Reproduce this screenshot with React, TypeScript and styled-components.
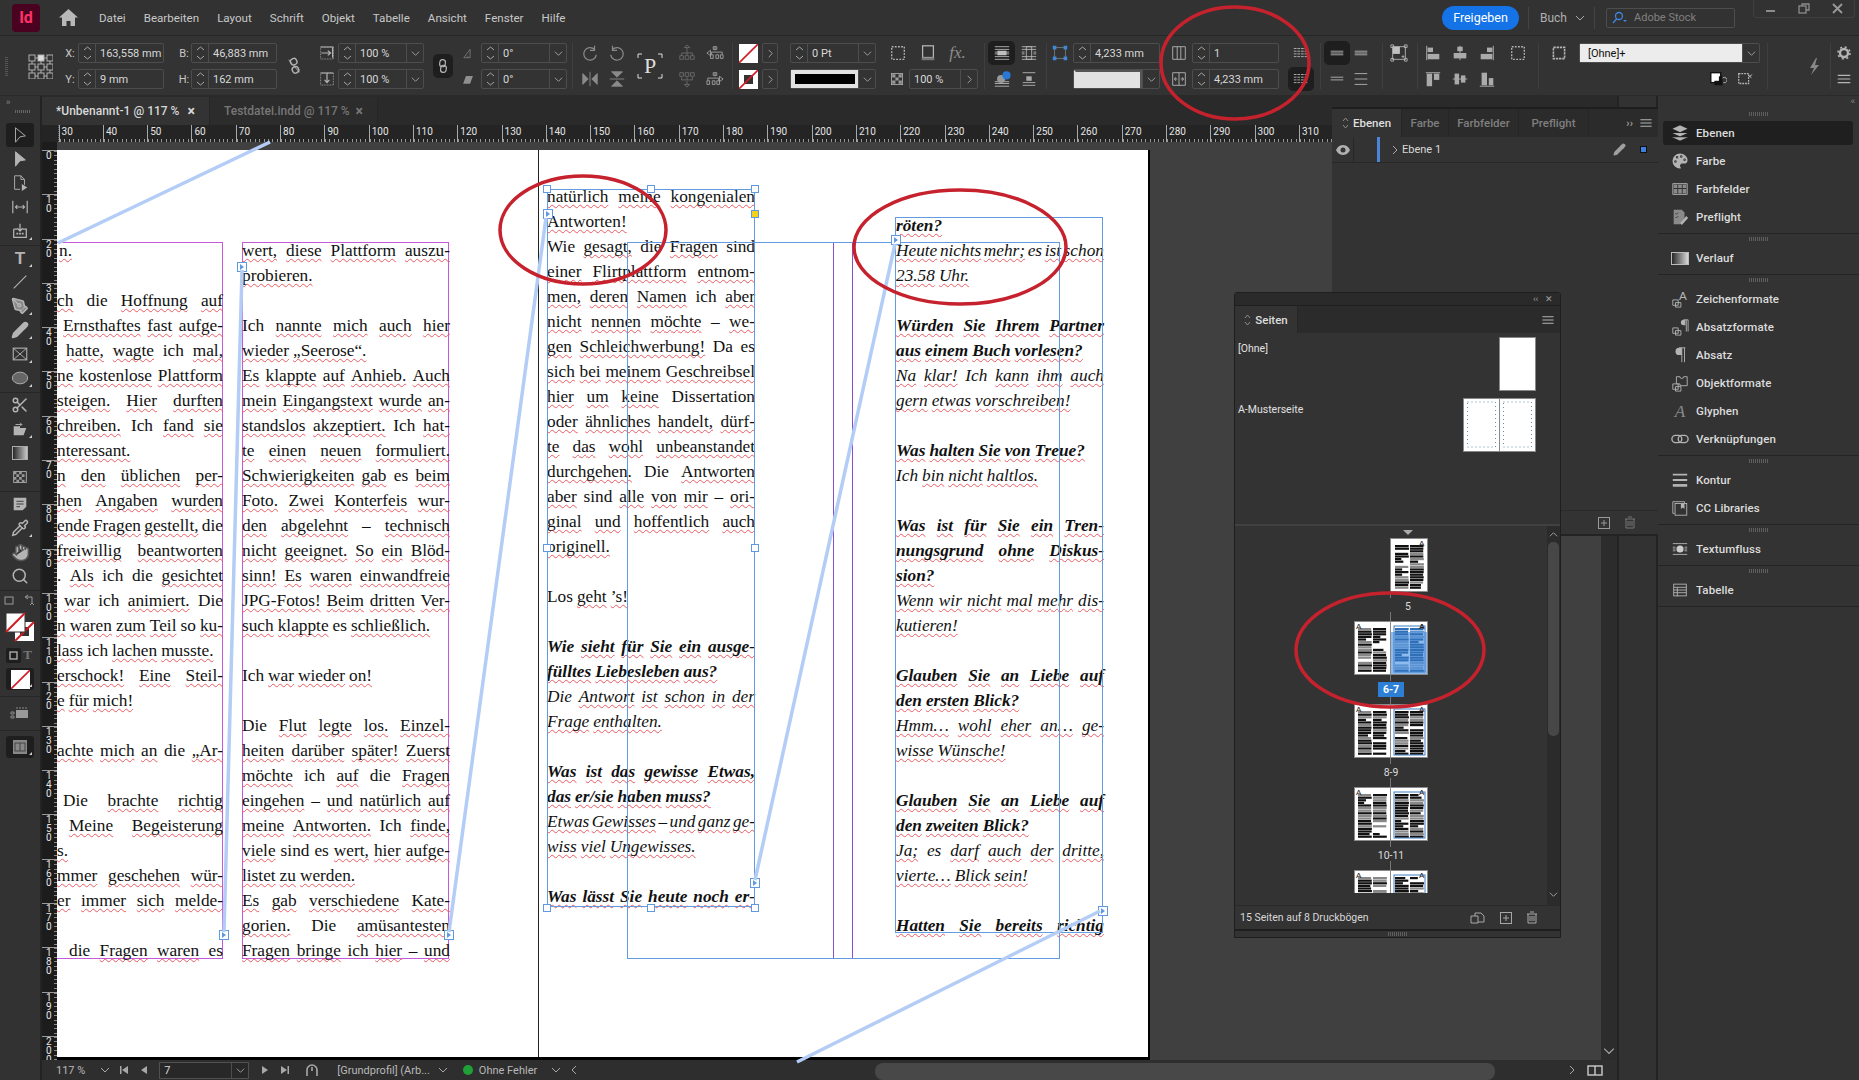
import React from "react";
import styled, { createGlobalStyle } from "styled-components";
import { Hand, Layers, Palette, Pencil, PenTool, Pipette, Scissors, Search } from "lucide-react";

const F = "#b4b4b4";

const Global = createGlobalStyle`
  html, body { margin: 0; padding: 0; background: #333; }
  body { width: 1859px; height: 1080px; overflow: hidden; font-family: Roboto, "Liberation Sans", sans-serif; }
  * { box-sizing: border-box; }
`;

const Shell = styled.div`
  position: relative;
  width: 1859px;
  height: 1080px;
  overflow: hidden;
  background: #333;
  color: #d8d8d8;
  display: flex;
  flex-direction: column;
`;

/* menu bar */
const MenuBar = styled.div`
  height: 36px;
  flex: none;
  display: flex;
  align-items: center;
  background: #323232;
  border-bottom: 1px solid #262626;
`;
const Logo = styled.div`
  width: 28px;
  height: 28px;
  margin-left: 12px;
  border-radius: 4px;
  background: #49021f;
  color: #ff3366;
  font-size: 16px;
  font-weight: 700;
  display: grid;
  place-items: center;
`;
const HomeBtn = styled.div`
  margin-left: 18px;
  width: 20px;
  display: grid;
  place-items: center;
`;
const MenuList = styled.div`
  margin-left: 21px;
  display: flex;
  gap: 18px;
  font-size: 11.6px;
  color: #c8c8c8;
`;
const MenuRight = styled.div`
  margin-left: auto;
  display: flex;
  align-items: center;
  height: 100%;
`;
const Share = styled.div`
  width: 77px;
  height: 24px;
  flex: none;
  border-radius: 12px;
  background: #1473e6;
  color: #fff;
  font-size: 12.5px;
  font-weight: 400;
  display: grid;
  place-items: center;
`;
const MenuSep = styled.div`
  width: 1px;
  height: 22px;
  background: #444;
  margin: 0 11px 0 9px;
`;
const BookLabel = styled.span`
  font-size: 12px;
  color: #b0b0b0;
  width: 35px;
`;
const StockSearch = styled.div`
  width: 129px;
  height: 20px;
  border: 1px solid #4d4d4d;
  border-radius: 2px;
  display: flex;
  align-items: center;
  gap: 6px;
  padding-left: 5px;
  font-size: 11px;
  color: #808080;
`;
const WinControls = styled.div`
  align-self: flex-start;
  margin-left: 18px;
  margin-right: 4px;
  width: 102px;
  height: 18px;
  border: 1px solid #3f3f3f;
  border-top: 0;
  border-radius: 0 0 3px 3px;
  display: flex;
  align-items: center;
  justify-content: space-around;
`;

/* control bar */
const ControlBar = styled.div`
  height: 60px;
  flex: none;
  display: flex;
  align-items: flex-start;
  padding-top: 7px;
  background: #333;
  border-bottom: 1px solid #2a2a2a;
`;
const Col = styled.div<{ $ml: number; $w: number }>`
  margin-left: ${(p) => p.$ml}px;
  width: ${(p) => p.$w}px;
  flex: none;
  display: flex;
  flex-direction: column;
  gap: 6px;
  align-items: center;
`;
const Cell = styled.div<{ $on?: boolean }>`
  width: 100%;
  height: 20px;
  display: flex;
  align-items: center;
  justify-content: center;
  position: relative;
  font-size: 11px;
  color: #c8c8c8;
  ${(p) => (p.$on ? "background:#1e1e1e;border-radius:3px;outline:2px solid #1e1e1e;" : "")}
`;
const CellRow = styled.div`
  width: 100%;
  height: 20px;
  display: flex;
  align-items: center;
  justify-content: space-between;
`;
const ClearRow = styled(CellRow)`
  justify-content: flex-end;
  gap: 9px;
  padding-right: 6px;
`;
const Sep = styled.div<{ $ml: number }>`
  margin-left: ${(p) => p.$ml}px;
  width: 1px;
  height: 46px;
  flex: none;
  background: #3f3f3f;
`;
const Grip = styled.div`
  margin-left: 5px;
  margin-top: 14px;
  width: 3px;
  height: 20px;
  flex: none;
  background: repeating-linear-gradient(180deg, #555 0 1px, transparent 1px 2px);
`;
const FieldBox = styled.div`
  width: 100%;
  height: 20px;
  flex: none;
  border: 1px solid #4d4d4d;
  border-radius: 2px;
  display: flex;
  align-items: center;
  font-size: 11px;
  color: #d8d8d8;
`;
const OpacityField = styled(FieldBox)`
  width: 69px;
`;
const Stepper = styled.div`
  width: 17px;
  height: 100%;
  flex: none;
  border-right: 1px solid #4d4d4d;
  display: flex;
  align-items: center;
  justify-content: center;
`;
const FieldValue = styled.span`
  flex: 1;
  padding-left: 4px;
  white-space: nowrap;
`;
const FieldDrop = styled.div`
  width: 17px;
  height: 100%;
  flex: none;
  border-left: 1px solid #4d4d4d;
  display: grid;
  place-items: center;
`;
const Chevron = styled.svg`
  fill: none;
  stroke: #a8a8a8;
  stroke-width: 1;
`;
const StrokePreview = styled.div`
  flex: 1;
  height: 100%;
  background: #e2e2e2;
  display: flex;
  align-items: center;
  padding: 0 3px 0 4px;
`;
const StrokeBar = styled.div`
  height: 10px;
  width: 100%;
  background: #000;
`;
const FramePreview = styled.div`
  flex: 1;
  height: 100%;
  background: #e2e2e2;
  border-top: 2px solid #555;
  border-right: 2px solid #555;
  border-left: 2px solid #e2e2e2;
`;
const StyleSelect = styled.div`
  flex: 1;
  height: 100%;
  background: #ececec;
  color: #111;
  display: flex;
  align-items: center;
  padding-left: 8px;
  font-size: 11px;
`;
const Swatch = styled.svg`
  display: block;
`;
const FxLabel = styled.span`
  font-family: "Liberation Serif", serif;
  font-style: italic;
  font-size: 17px;
  color: #8c8c8c;
`;
const ProxyWrap = styled.div`
  height: 46px;
  display: flex;
  align-items: center;
`;

/* workspace */
const Workspace = styled.div`
  flex: 1;
  display: flex;
  min-height: 0;
`;
const ToolBar = styled.div`
  width: 42px;
  flex: none;
  background: #323232;
  border-right: 2px solid #232323;
  display: flex;
  flex-direction: column;
  align-items: center;
`;
const ToolHead = styled.div`
  height: 27px;
  width: 100%;
  flex: none;
  font-size: 9px;
  color: #8c8c8c;
  padding: 1px 0 0 6px;
  letter-spacing: -1px;
`;
const ToolGrip = styled.div`
  width: 16px;
  height: 3px;
  margin: 3px auto 0;
  background: repeating-linear-gradient(90deg, #666 0 1px, transparent 1px 2px);
`;
const ToolGroup = styled.div`
  width: 100%;
  padding-bottom: 2px;
  border-bottom: 1px solid #262626;
`;
const Tool = styled.div<{ $on?: boolean }>`
  position: relative;
  width: 28px;
  height: 24px;
  margin: 0 auto;
  display: grid;
  place-items: center;
  color: ${F};
  ${(p) => (p.$on ? "background:#1e1e1e;border-radius:3px;" : "")}
`;
const ToolCorner = styled.i`
  position: absolute;
  right: 2px;
  bottom: 3px;
  width: 0;
  height: 0;
  border-left: 3px solid transparent;
  border-bottom: 3px solid #cfcfcf;
`;
const ColorBlock = styled.div`
  position: relative;
  width: 32px;
  height: 50px;
  margin-top: 2px;
`;
const FormatRow = styled.div`
  margin-top: 4px;
  width: 28px;
  height: 16px;
  display: flex;
  align-items: center;
  justify-content: space-between;
`;
const FormatBox = styled.div`
  width: 15px;
  height: 15px;
  background: #1e1e1e;
  border-radius: 2px;
  display: grid;
  place-items: center;
`;
const FormatT = styled.span`
  font-family: "Liberation Serif", serif;
  font-weight: 700;
  font-size: 13px;
  color: #777;
  margin-right: 2px;
`;
const ToolSpaced = styled(Tool)`
  margin-top: 5px;
  height: 22px;
`;
const ToolLine = styled.div`
  width: 100%;
  height: 1px;
  margin-top: 6px;
  background: #262626;
`;

const DocArea = styled.div`
  flex: 1;
  min-width: 0;
  display: flex;
  flex-direction: column;
`;
const TabRow = styled.div`
  height: 29px;
  flex: none;
  padding-top: 1px;
  display: flex;
  background: #2a2a2a;
`;
const DocTab = styled.div<{ $on?: boolean }>`
  width: 168px;
  display: flex;
  align-items: center;
  justify-content: space-between;
  padding: 0 14px 0 14px;
  font-size: 12px;
  font-weight: 500;
  white-space: nowrap;
  background: ${(p) => (p.$on ? "#333" : "#2c2c2c")};
  color: ${(p) => (p.$on ? "#d8d8d8" : "#777")};
  border-right: 1px solid #262626;
`;
const TabClose = styled.b`
  font-size: 14px;
  font-weight: 700;
`;
const TopRuler = styled.div`
  height: 17px;
  flex: none;
  display: flex;
  background: #242424;
  overflow: hidden;
`;
const RulerOrigin = styled.div`
  width: 16.6px;
  flex: none;
  border-right: 1px dotted #666;
`;
const RulerCell = styled.div`
  width: 44.3px;
  flex: none;
  height: 17px;
  padding: 0 0 0 2px;
  font-size: 10px;
  line-height: 13px;
  color: #e4e4e4;
  border-left: 1px solid #a8a8a8;
  background: repeating-linear-gradient(90deg, #999 0 1px, transparent 1px 4.43px) bottom left / 100% 3px no-repeat;
`;
const CanvasRow = styled.div`
  flex: 1;
  min-height: 0;
  display: flex;
`;
const SideRuler = styled.div`
  width: 15px;
  flex: none;
  padding-top: 8px;
  background: #1c1c1c;
  overflow: hidden;
`;
const SideCell = styled.div`
  height: 44.3px;
  border-top: 1px solid #999;
  padding: 0 0 0 4px;
  font-size: 10px;
  line-height: 9px;
  color: #e4e4e4;
  display: flex;
  flex-direction: column;
  background: repeating-linear-gradient(180deg, #888 0 1px, transparent 1px 4.43px) top right / 3px 100% no-repeat;
`;
const Canvas = styled.div`
  flex: 1;
  min-width: 0;
  padding-top: 8px;
  background: #404040;
  overflow: hidden;
`;
const VScroll = styled.div`
  width: 16px;
  flex: none;
  background: #2c2c2c;
  display: flex;
  align-items: flex-end;
  justify-content: center;
  padding-bottom: 3px;
`;
const PageSheet = styled.div`
  position: relative;
  width: 1093px;
  height: 910px;
  background: #fff;
  border-right: 2px solid #000;
  border-bottom: 3px solid #000;
  overflow: hidden;
`;
const Spine = styled.div`
  position: absolute;
  left: 481px;
  top: 0;
  bottom: 0;
  width: 1px;
  background: #222;
`;
const Rect = styled.div<{ $x: number; $y: number; $w: number; $h: number; $c: string }>`
  position: absolute;
  left: ${(p) => p.$x}px;
  top: ${(p) => p.$y}px;
  width: ${(p) => p.$w}px;
  height: ${(p) => p.$h}px;
  border: 1px solid ${(p) => p.$c};
`;
const TextColumn = styled.div<{ $x: number; $y: number; $w: number }>`
  position: absolute;
  left: ${(p) => p.$x}px;
  top: ${(p) => p.$y}px;
  width: ${(p) => p.$w}px;
  font-family: "Liberation Serif", serif;
  font-size: 17.3px;
  color: #111;
`;
const TextLine = styled.div<{ $just: boolean; $kind: string; $inset: number }>`
  height: 25px;
  line-height: 25px;
  padding-left: ${(p) => p.$inset}px;
  display: flex;
  white-space: nowrap;
  justify-content: ${(p) => (p.$just ? "space-between" : "flex-start")};
  gap: ${(p) => (p.$just ? "0" : "4px")};
  font-style: ${(p) => (p.$kind ? "italic" : "normal")};
  font-weight: ${(p) => (p.$kind === "*" ? 700 : 400)};
`;
const Word = styled.span<{ $plain: boolean }>`
  text-decoration: ${(p) => (p.$plain ? "none" : "underline wavy #ea5a62")};
  text-decoration-thickness: 1px;
  text-underline-offset: 2px;
  text-decoration-skip-ink: none;
`;
const Handle = styled.div<{ $x: number; $y: number; $kind?: string }>`
  position: absolute;
  left: ${(p) => p.$x - 57 - 4}px;
  top: ${(p) => p.$y - 150 - 4}px;
  width: 8px;
  height: 8px;
  border: 1px solid #5f9ae0;
  background: ${(p) => (p.$kind === "y" ? "#f3d21c" : "#fff")};
`;
const Port = styled(Handle)`
  left: ${(p) => p.$x - 57 - 5}px;
  top: ${(p) => p.$y - 150 - 5}px;
  width: 10px;
  height: 10px;
  &::after {
    content: "";
    position: absolute;
    left: 2px;
    top: 1px;
    border-left: 4px solid #5f9ae0;
    border-top: 3px solid transparent;
    border-bottom: 3px solid transparent;
  }
`;

/* status bar */
const StatusBar = styled.div`
  height: 20px;
  flex: none;
  display: flex;
  align-items: center;
  background: #2e2e2e;
  font-size: 11px;
  color: #b8b8b8;
  white-space: nowrap;
`;
const StatusItem = styled.div<{ $ml: number }>`
  margin-left: ${(p) => p.$ml}px;
  flex: none;
  display: flex;
  align-items: center;
`;
const PageField = styled.div`
  margin-left: 11px;
  width: 90px;
  height: 17px;
  flex: none;
  border: 1px solid #505050;
  background: #282828;
  display: flex;
  align-items: center;
  justify-content: space-between;
  padding-left: 4px;
  color: #d8d8d8;
`;
const GreenDot = styled.i`
  width: 10px;
  height: 10px;
  border-radius: 50%;
  background: #1fa038;
  margin-right: 6px;
`;
const ScrollTrack = styled.div`
  flex: 1;
  height: 17px;
  padding-left: 296px;
  margin-top: 3px;
`;
const ScrollThumb = styled.div`
  width: 620px;
  height: 100%;
  background: #484848;
  border-radius: 8px;
`;
const StatusEnd = styled.div`
  width: 55px;
  flex: none;
  display: flex;
  align-items: center;
  gap: 10px;
  padding-left: 5px;
`;

const RightStrip = styled.div`
  width: 41px;
  flex: none;
  background: #323232;
  border-left: 2px solid #232323;
  border-right: 2px solid #232323;
`;

/* dock */
const Dock = styled.div`
  width: 201px;
  flex: none;
  background: #333;
`;
const DockHead = styled.div`
  height: 13px;
  text-align: right;
  padding-right: 5px;
  font-size: 9px;
  line-height: 11px;
  color: #8c8c8c;
  letter-spacing: -1px;
`;
const DockGroup = styled.div`
  padding-bottom: 2px;
  border-bottom: 1px solid #242424;
`;
const DockGrip = styled.div`
  width: 20px;
  height: 10px;
  margin: 0 auto;
  background: repeating-linear-gradient(90deg, #5e5e5e 0 1px, transparent 1px 2px) center / 100% 4px no-repeat;
`;
const DockItem = styled.div<{ $on?: boolean }>`
  height: 28px;
  display: flex;
  align-items: center;
  gap: 6px;
  padding-left: 7px;
  margin: 0 6px 0 5px;
  font-size: 11.5px;
  font-weight: 500;
  letter-spacing: 0.1px;
  color: #dcdcdc;
  ${(p) => (p.$on ? "background:#1f1f1f;border-radius:3px;height:24px;margin-top:2px;margin-bottom:2px;" : "")}
`;
const DockIcon = styled.div`
  width: 20px;
  height: 20px;
  flex: none;
  display: grid;
  place-items: center;
  color: ${F};
`;

/* floating panels */
const LayersPanel = styled.div`
  position: absolute;
  left: 1332px;
  top: 107px;
  width: 326px;
  height: 429px;
  display: flex;
  flex-direction: column;
  background: #333;
  border-top: 2px solid #1e1e1e;
  border-bottom: 2px solid #232323;
`;
const PanelTabs = styled.div`
  height: 28px;
  flex: none;
  display: flex;
  align-items: center;
  background: #2b2b2b;
  font-size: 11.5px;
  font-weight: 500;
  color: #7f7f7f;
`;
const PanelTab = styled.div<{ $on?: boolean; $w: number }>`
  width: ${(p) => p.$w}px;
  height: 100%;
  flex: none;
  display: flex;
  align-items: center;
  justify-content: center;
  gap: 4px;
  border-right: 1px solid #262626;
  ${(p) => (p.$on ? "background:#333;color:#dedede;" : "")}
`;
const PanelMenu = styled.div`
  margin-left: auto;
  padding-right: 4px;
  display: flex;
  align-items: center;
  gap: 5px;
  font-size: 11px;
  color: #a8a8a8;
`;
const LayerRow = styled.div`
  height: 26px;
  flex: none;
  display: flex;
  align-items: center;
  border-bottom: 1px solid #272727;
  font-size: 11px;
  color: #d8d8d8;
`;
const EyeCell = styled.div`
  width: 22px;
  height: 100%;
  border-right: 1px solid #272727;
  display: grid;
  place-items: center;
`;
const LayerColor = styled.i`
  margin-left: 23px;
  width: 3px;
  height: 100%;
  background: #4a85d8;
`;
const LayerName = styled.span`
  flex: 1;
  margin-left: 2px;
`;
const LayerMark = styled.i`
  width: 7px;
  height: 7px;
  margin: 0 11px 0 14px;
  background: #3f7fe0;
  border: 1px solid #111;
`;
const PanelFill = styled.div`
  flex: 1;
`;
const PanelFoot = styled.div<{ $h: number }>`
  height: ${(p) => p.$h}px;
  flex: none;
  display: flex;
  align-items: center;
  justify-content: flex-end;
  gap: 14px;
  padding-right: 22px;
  border-top: 1px solid #2a2a2a;
  font-size: 10.5px;
  color: #d8d8d8;
`;
const FootText = styled.span`
  margin-right: auto;
  padding-left: 5px;
`;

const PagesPanel = styled.div`
  position: absolute;
  left: 1234px;
  top: 292px;
  width: 327px;
  height: 646px;
  display: flex;
  flex-direction: column;
  background: #333;
  border: 1px solid #1e1e1e;
  border-radius: 3px 3px 0 0;
  z-index: 2;
`;
const PanelTitle = styled.div`
  height: 13px;
  flex: none;
  background: #2a2a2a;
  border-bottom: 1px solid #1e1e1e;
  text-align: right;
  padding-right: 7px;
  font-size: 9px;
  line-height: 12px;
  color: #a0a0a0;
`;
const PagesTabs = styled(PanelTabs)`
  height: 27px;
  color: #dedede;
`;
const Masters = styled.div`
  height: 193px;
  flex: none;
  padding-top: 4px;
  border-bottom: 2px solid #414141;
  display: flex;
  flex-direction: column;
  gap: 7px;
`;
const MasterRow = styled.div`
  height: 54px;
  display: flex;
  justify-content: space-between;
  padding: 0 24px 0 3px;
  font-size: 10.5px;
  color: #e0e0e0;
`;
const MasterName = styled.span`
  padding-top: 5px;
`;
const PagesBody = styled.div`
  flex: 1;
  min-height: 0;
  display: flex;
`;
const SpreadList = styled.div`
  flex: 1;
  height: 367px;
  padding: 12px 0 0 119px;
  overflow: hidden;
  position: relative;
`;
const SpreadRow = styled.div`
  width: 74px;
`;
const SpreadLabel = styled.div<{ $right?: boolean }>`
  height: 29px;
  display: flex;
  align-items: center;
  justify-content: center;
  padding-left: ${(p) => (p.$right ? "34px" : "0")};
  font-size: 10.5px;
  color: #dcdcdc;
  background: linear-gradient(#777, #777) no-repeat 36px 0 / 1px 6px, linear-gradient(#777, #777) no-repeat 36px 100% / 1px 9px;
`;
const LabelChip = styled.span<{ $on?: boolean }>`
  padding: 1px 5px;
  ${(p) => (p.$on ? "background:#2d7fd6;color:#fff;font-weight:700;" : "")}
`;
const TopMarker = styled.i`
  position: absolute;
  left: 168px;
  top: 4px;
  border-top: 5px solid #aaa;
  border-left: 5px solid transparent;
  border-right: 5px solid transparent;
`;
const PagesScroll = styled.div`
  width: 13px;
  flex: none;
  padding: 4px 1px 2px;
  background: #2b2b2b;
  display: flex;
  flex-direction: column;
  align-items: center;
  gap: 3px;
  height: 379px;
`;
const PagesThumb = styled.div`
  width: 11px;
  height: 194px;
  border-radius: 5px;
  background: #474747;
`;
const ScrollEnd = styled.div`
  margin-top: auto;
`;
const PanelResize = styled.div`
  height: 8px;
  flex: none;
  border-top: 2px solid #1e1e1e;
  background: repeating-linear-gradient(90deg, #5e5e5e 0 1px, transparent 1px 2px) center / 20px 4px no-repeat;
`;
const Overlay = styled.svg`
  position: absolute;
  inset: 0;
  z-index: 5;
  pointer-events: none;
`;

/* small drawings */
const Chev = ({ d = "down", s = 9 }: { d?: "down" | "up" | "left" | "right"; s?: number }) => {
  const pts = { down: "1,3 5,7 9,3", up: "1,7 5,3 9,7", left: "7,1 3,5 7,9", right: "3,1 7,5 3,9" }[d];
  return (
    <Chevron width={s} height={s} viewBox="0 0 10 10">
      <polyline points={pts} />
    </Chevron>
  );
};

const StepIcon = () => (
  <svg width="9" height="16" viewBox="0 0 9 16" fill="none" stroke="#a8a8a8">
    <polyline points="1,5 4.5,2 8,5" />
    <polyline points="1,11 4.5,14 8,11" />
  </svg>
);

const StepIconSmall = () => (
  <svg width="7" height="12" viewBox="0 0 7 12" fill="none" stroke="#8c8c8c">
    <polyline points="1,4 3.5,1 6,4" />
    <polyline points="1,8 3.5,11 6,8" />
  </svg>
);

const Ic = ({ s = 18, vb = 20, children }: { s?: number; vb?: number; children: React.ReactNode }) => (
  <svg width={s} height={s} viewBox={`0 0 ${vb} ${vb}`} fill="none" stroke={F} strokeWidth="1">
    {children}
  </svg>
);

const Field = ({ value, drop }: { value: string; drop?: boolean }) => (
  <FieldBox>
    <Stepper>
      <StepIcon />
    </Stepper>
    <FieldValue>{value}</FieldValue>
    {drop && (
      <FieldDrop>
        <Chev />
      </FieldDrop>
    )}
  </FieldBox>
);

const Proxy = () => {
  const cells = [];
  for (let r = 0; r < 3; r++)
    for (let c = 0; c < 3; c++)
      cells.push(<rect key={`${r}${c}`} x={1 + c * 9} y={1 + r * 9} width="6" height="6" fill={r === 0 && c === 1 ? "#ddd" : "none"} />);
  return (
    <svg width="25" height="25" viewBox="0 0 25 25" fill="none" stroke="#b0b0b0">
      {cells}
      <path d="M7 4h3M16 4h3M7 13h3M16 13h3M7 22h3M16 22h3M4 7v3M13 7v3M22 7v3M4 16v3M13 16v3M22 16v3" />
    </svg>
  );
};

const NoneSwatch = ({ inner }: { inner?: boolean }) => (
  <Swatch width="19" height="19" viewBox="0 0 19 19">
    <rect width="19" height="19" fill="#fff" />
    {inner && <rect x="5" y="5" width="9" height="9" fill="#333" />}
    <line x1="0" y1="19" x2="19" y2="0" stroke="#d01c24" strokeWidth="1.6" />
  </Swatch>
);

const lines = (ys: number[], x1: number, x2: number) => <path d={ys.map((y) => `M${x1} ${y}H${x2}`).join("")} />;

const ctl: Record<string, React.ReactNode> = {
  linkOff: (
    <>
      <rect x="6" y="2" width="7" height="7" rx="3" strokeWidth="1.6" transform="rotate(-25 9 5)" />
      <rect x="8" y="11" width="7" height="7" rx="3" strokeWidth="1.6" transform="rotate(-25 11 14)" />
      <path d="M4 3l12 14" />
    </>
  ),
  link: (
    <>
      <rect x="6" y="2" width="7" height="9" rx="3.5" strokeWidth="1.5" transform="rotate(8 10 6)" />
      <rect x="7" y="9" width="7" height="9" rx="3.5" strokeWidth="1.5" transform="rotate(8 10 14)" />
    </>
  ),
  scaleX: (
    <>
      <rect x="2" y="2.5" width="16" height="15" strokeDasharray="1 1" />
      <path d="M2 2.5h16M3 10h11M11 7l3.5 3-3.5 3" strokeWidth="1.5" />
      <path d="M17 3v13" strokeWidth="1.5" />
    </>
  ),
  scaleY: (
    <>
      <rect x="2" y="2.5" width="16" height="15" strokeDasharray="1 1" />
      <path d="M2 2.5h16M10 3v11M7 11l3 3.5 3-3.5" strokeWidth="1.5" />
    </>
  ),
  angle: <path d="M4 16L13 4v12zM10 16a4 4 0 0 0-1-3" stroke="#8a8a8a" />,
  shear: <path d="M3 16L7 5h10l-4 11z" fill="#8f8f8f" stroke="none" />,
  rotR: <path d="M15 6a7 7 0 1 0 2 6M15 2v5h-5" stroke="#8a8a8a" strokeWidth="1.4" />,
  rotL: <path d="M5 6a7 7 0 1 1-2 6M5 2v5h5" stroke="#8a8a8a" strokeWidth="1.4" />,
  flipH: <path d="M2 4v12l6-6zM18 4v12l-6-6z M10 2v16" fill="#8a8a8a" stroke="#8a8a8a" />,
  flipV: <path d="M4 2h12l-6 6zM4 18h12l-6-6z M2 10h16" fill="#8a8a8a" stroke="#8a8a8a" />,
  orgA: <path d="M10 1l3 3H7zM10 4v4M4 13v-3h12v3M10 8v5M2 13h4v4H2zM8 13h4v4H8zM14 13h4v4h-4z" stroke="#6c6c6c" />,
  orgB: <path d="M1 10l4-3v6zM10 3v4M6 12V9h12v3M5 12h3v4H5zM11 12h3v4h-3zM16 12h3v4h-3zM8 3h4v3H8z" stroke="#a0a0a0" />,
  orgC: <path d="M10 19l3-3H7zM10 12v4M4 8v3h12V8M10 8v3M2 3h4v4H2zM8 3h4v4H8zM14 3h4v4h-4z" stroke="#6c6c6c" />,
  orgD: <path d="M19 10l-4-3v6zM10 3v4M2 12V9h12v3M1 12h3v4H1zM7 12h3v4H7zM12 12h3v4h-3zM8 3h4v3H8z" stroke="#a0a0a0" />,
  frameDash: <rect x="3" y="3" width="14" height="14" strokeDasharray="2 1.5" strokeWidth="1.5" />,
  frameShadow: (
    <>
      <rect x="4" y="2" width="12" height="13" strokeWidth="1.4" />
      <rect x="3" y="15" width="14" height="3" fill="#777" stroke="none" />
    </>
  ),
  checker: (
    <>
      <rect x="3" y="3" width="14" height="14" />
      <path d="M4 4h4v4H4zM12 4h4v4h-4zM8 8h4v4H8zM4 12h4v4H4zM12 12h4v4h-4z" fill="#999" stroke="none" />
    </>
  ),
  wrapAll: (
    <>
      {lines([3, 6, 14, 17], 2, 18)}
      <rect x="5" y="7.5" width="10" height="5" fill="#ccc" stroke="none" />
      {lines([9, 11], 2, 18)}
    </>
  ),
  wrapBox: (
    <>
      {lines([3, 6, 14, 17], 2, 18)}
      <rect x="7" y="3" width="6" height="14" />
      {lines([9, 11], 2, 5)}
      {lines([9, 11], 15, 18)}
    </>
  ),
  wrapFlow: (
    <>
      {lines([13, 15, 18], 2, 18)}
      <circle cx="9" cy="10" r="4.5" fill="#999" stroke="none" />
      <circle cx="15" cy="6" r="4.5" fill="#2a78d6" stroke="none" />
    </>
  ),
  wrapMid: (
    <>
      {lines([3, 17, 14], 3, 17)}
      <rect x="7" y="7" width="6" height="5" fill="#aaa" stroke="none" />
    </>
  ),
  margin: (
    <>
      <rect x="4" y="4" width="12" height="12" stroke="#777" />
      <path d="M2 2h4v4H2zM14 2h4v4h-4zM2 14h4v4H2zM14 14h4v4h-4z" fill="#3d88d8" stroke="none" />
    </>
  ),
  cols: <path d="M3 3h14v14H3zM8 3v14M12 3v14" />,
  colGap: <path d="M3 3h14v14H3zM10 3v14M5 10h3M6.5 8L5 10l1.5 2M15 10h-3M13.5 8L15 10l-1.5 2" />,
  alignLines: <path d="M2 5h16M2 8h16M2 11h16M2 14h16" strokeDasharray="3 1" />,
  rule1: <path d="M3 8h14M3 10h14M3 12h14" />,
  rule2: <path d="M3 8h14M3 11h14" />,
  rule3: <path d="M3 4h14M3 16h14M3 10h14" />,
  fit: (
    <>
      <rect x="3" y="3" width="14" height="14" />
      <rect x="3" y="3" width="8" height="8" fill="#c0c0c0" stroke="none" />
      <path d="M1 1h3v3H1zM16 1h3v3h-3zM1 16h3v3H1zM16 16h3v3h-3zM13 14h3M14.5 12.5v3" />
    </>
  ),
  ohneFrame: <rect x="3" y="3" width="14" height="14" strokeDasharray="3 1" strokeWidth="2" />,
  clear1: (
    <>
      <rect x="2" y="3" width="11" height="11" fill="#fff" stroke="#111" strokeWidth="1.5" />
      <rect x="6" y="7" width="9" height="10" fill="#111" stroke="none" />
      <rect x="4" y="5" width="7" height="7" fill="#fff" stroke="none" />
      <path d="M15 9a3 3 0 1 1 1 5" />
    </>
  ),
  clear2: (
    <>
      <rect x="3" y="4" width="11" height="11" strokeDasharray="2 1" strokeWidth="1.4" />
      <path d="M14 8l4-3M15 6l2 3" />
    </>
  ),
  bolt: <path d="M12 2L6 12h4l-3 7 8-10h-4l2-7z" fill="#888" stroke="none" />,
  gear: (
    <>
      <circle cx="10" cy="10" r="5" strokeWidth="3" />
      <circle cx="10" cy="10" r="7.5" strokeWidth="2" strokeDasharray="2.5 3.4" />
    </>
  ),
  menu: <path d="M3 6h14M3 10h14M3 14h14" strokeWidth="1.3" />,
};

const Align = ({ kind }: { kind: number }) => {
  const shapes: React.ReactNode[] = [
    <>
      <path d="M3 2v16" />
      <rect x="4" y="4" width="6" height="5" fill="#aaa" stroke="none" />
      <rect x="4" y="11" width="13" height="6" fill="#aaa" stroke="none" />
    </>,
    <>
      <path d="M10 2v16" />
      <rect x="7" y="3" width="6" height="5" fill="#aaa" stroke="none" />
      <rect x="3" y="10" width="14" height="6" fill="#aaa" stroke="none" />
    </>,
    <>
      <path d="M17 2v16" />
      <rect x="10" y="4" width="6" height="5" fill="#aaa" stroke="none" />
      <rect x="3" y="11" width="13" height="6" fill="#aaa" stroke="none" />
    </>,
    <>
      <path d="M2 3h16" />
      <rect x="3" y="4" width="6" height="14" fill="#aaa" stroke="none" />
      <rect x="11" y="4" width="6" height="7" fill="#aaa" stroke="none" />
    </>,
    <>
      <path d="M2 10h16" />
      <rect x="4" y="4" width="5" height="12" fill="#aaa" stroke="none" />
      <rect x="11" y="6" width="5" height="8" fill="#aaa" stroke="none" />
    </>,
    <>
      <path d="M2 18h16" />
      <rect x="4" y="3" width="6" height="14" fill="#aaa" stroke="none" />
      <rect x="12" y="9" width="5" height="8" fill="#aaa" stroke="none" />
    </>,
  ];
  return <Ic>{shapes[kind]}</Ic>;
};

const Ctl = ({ name, s }: { name: string; s?: number }) => <Ic s={s}>{ctl[name]}</Ic>;

const TextFrameIcon = () => (
  <svg width="28" height="28" viewBox="0 0 28 28" fill="none" stroke="#ddd">
    <path d="M2 6V2h4M22 2h4v4M2 22v4h4M22 26h4v-4" />
    <text x="14" y="21" textAnchor="middle" fontFamily="Liberation Serif, serif" fontSize="22" fill="#ddd" stroke="none">
      P
    </text>
  </svg>
);

const ControlStrip = () => (
  <ControlBar>
    <Grip />
    <Col $ml={20} $w={25}>
      <ProxyWrap>
        <Proxy />
      </ProxyWrap>
    </Col>
    <Col $ml={11} $w={12}>
      <Cell>X:</Cell>
      <Cell>Y:</Cell>
    </Col>
    <Col $ml={2} $w={86}>
      <Field value="163,558 mm" />
      <Field value="9 mm" />
    </Col>
    <Col $ml={15} $w={10}>
      <Cell>B:</Cell>
      <Cell>H:</Cell>
    </Col>
    <Col $ml={2} $w={86}>
      <Field value="46,883 mm" />
      <Field value="162 mm" />
    </Col>
    <Col $ml={8} $w={18}>
      <ProxyWrap>
        <Ctl name="linkOff" />
      </ProxyWrap>
    </Col>
    <Col $ml={16} $w={16}>
      <Cell>
        <Ctl name="scaleX" s={16} />
      </Cell>
      <Cell>
        <Ctl name="scaleY" s={16} />
      </Cell>
    </Col>
    <Col $ml={3} $w={86}>
      <Field value="100 %" drop />
      <Field value="100 %" drop />
    </Col>
    <Col $ml={8} $w={21}>
      <ProxyWrap>
        <Cell $on>
          <Ctl name="link" s={16} />
        </Cell>
      </ProxyWrap>
    </Col>
    <Col $ml={8} $w={14}>
      <Cell>
        <Ctl name="angle" s={15} />
      </Cell>
      <Cell>
        <Ctl name="shear" s={15} />
      </Cell>
    </Col>
    <Col $ml={6} $w={86}>
      <Field value="0°" drop />
      <Field value="0°" drop />
    </Col>
    <Sep $ml={5} />
    <Col $ml={7} $w={20}>
      <Cell>
        <Ctl name="rotR" />
      </Cell>
      <Cell>
        <Ctl name="flipH" />
      </Cell>
    </Col>
    <Col $ml={7} $w={20}>
      <Cell>
        <Ctl name="rotL" />
      </Cell>
      <Cell>
        <Ctl name="flipV" />
      </Cell>
    </Col>
    <Col $ml={9} $w={28}>
      <ProxyWrap>
        <TextFrameIcon />
      </ProxyWrap>
    </Col>
    <Col $ml={14} $w={18}>
      <Cell>
        <Ctl name="orgA" />
      </Cell>
      <Cell>
        <Ctl name="orgC" />
      </Cell>
    </Col>
    <Col $ml={10} $w={18}>
      <Cell>
        <Ctl name="orgB" />
      </Cell>
      <Cell>
        <Ctl name="orgD" />
      </Cell>
    </Col>
    <Sep $ml={8} />
    <Col $ml={6} $w={19}>
      <Cell>
        <NoneSwatch />
      </Cell>
      <Cell>
        <NoneSwatch inner />
      </Cell>
    </Col>
    <Col $ml={4} $w={16}>
      <FieldBox>
        <Cell>
          <Chev d="right" />
        </Cell>
      </FieldBox>
      <FieldBox>
        <Cell>
          <Chev d="right" />
        </Cell>
      </FieldBox>
    </Col>
    <Col $ml={12} $w={86}>
      <Field value="0 Pt" drop />
      <FieldBox>
        <StrokePreview>
          <StrokeBar />
        </StrokePreview>
        <FieldDrop>
          <Chev />
        </FieldDrop>
      </FieldBox>
    </Col>
    <Col $ml={13} $w={89}>
      <CellRow>
        <Ctl name="frameDash" />
        <Ctl name="frameShadow" />
        <FxLabel>fx.</FxLabel>
        <span />
      </CellRow>
      <CellRow>
        <Ctl name="checker" s={16} />
        <OpacityField>
          <FieldValue>100 %</FieldValue>
          <FieldDrop>
            <Chev d="right" />
          </FieldDrop>
        </OpacityField>
      </CellRow>
    </Col>
    <Sep $ml={6} />
    <Col $ml={5} $w={23}>
      <Cell $on>
        <Ctl name="wrapAll" />
      </Cell>
      <Cell>
        <Ctl name="wrapFlow" />
      </Cell>
    </Col>
    <Col $ml={4} $w={23}>
      <Cell>
        <Ctl name="wrapBox" />
      </Cell>
      <Cell>
        <Ctl name="wrapMid" />
      </Cell>
    </Col>
    <Sep $ml={6} />
    <Col $ml={4} $w={18}>
      <Cell>
        <Ctl name="margin" />
      </Cell>
    </Col>
    <Col $ml={4} $w={87}>
      <Field value="4,233 mm" />
      <FieldBox>
        <FramePreview />
        <FieldDrop>
          <Chev />
        </FieldDrop>
      </FieldBox>
    </Col>
    <Col $ml={10} $w={18}>
      <Cell>
        <Ctl name="cols" />
      </Cell>
      <Cell>
        <Ctl name="colGap" />
      </Cell>
    </Col>
    <Col $ml={4} $w={87}>
      <Field value="1" />
      <Field value="4,233 mm" />
    </Col>
    <Col $ml={11} $w={22}>
      <Cell>
        <Ctl name="alignLines" />
      </Cell>
      <Cell $on>
        <Ctl name="alignLines" />
      </Cell>
    </Col>
    <Sep $ml={8} />
    <Col $ml={5} $w={22}>
      <Cell $on>
        <Ctl name="rule1" />
      </Cell>
      <Cell>
        <Ctl name="rule2" />
      </Cell>
    </Col>
    <Col $ml={2} $w={22}>
      <Cell>
        <Ctl name="rule1" />
      </Cell>
      <Cell>
        <Ctl name="rule3" />
      </Cell>
    </Col>
    <Sep $ml={10} />
    <Col $ml={5} $w={22}>
      <Cell>
        <Ctl name="fit" />
      </Cell>
    </Col>
    <Sep $ml={7} />
    <Col $ml={4} $w={22}>
      <Cell>
        <Align kind={0} />
      </Cell>
      <Cell>
        <Align kind={3} />
      </Cell>
    </Col>
    <Col $ml={5} $w={22}>
      <Cell>
        <Align kind={1} />
      </Cell>
      <Cell>
        <Align kind={4} />
      </Cell>
    </Col>
    <Col $ml={5} $w={22}>
      <Cell>
        <Align kind={2} />
      </Cell>
      <Cell>
        <Align kind={5} />
      </Cell>
    </Col>
    <Col $ml={9} $w={22}>
      <Cell>
        <Ctl name="frameDash" />
      </Cell>
    </Col>
    <Sep $ml={9} />
    <Col $ml={9} $w={22}>
      <Cell>
        <Ctl name="ohneFrame" s={16} />
      </Cell>
    </Col>
    <Col $ml={9} $w={181}>
      <FieldBox>
        <StyleSelect>[Ohne]+</StyleSelect>
        <FieldDrop>
          <Chev />
        </FieldDrop>
      </FieldBox>
      <ClearRow>
        <Ctl name="clear1" />
        <Ctl name="clear2" />
      </ClearRow>
    </Col>
    <Sep $ml={7} />
    <Col $ml={35} $w={22}>
      <ProxyWrap>
        <Ctl name="bolt" s={20} />
      </ProxyWrap>
    </Col>
    <Sep $ml={5} />
    <Col $ml={3} $w={20}>
      <Cell>
        <Ctl name="gear" s={16} />
      </Cell>
      <Cell>
        <Ctl name="menu" />
      </Cell>
    </Col>
  </ControlBar>
);

const ToolIcons: { node: React.ReactNode; corner?: boolean; on?: boolean }[][] = [
  [
    { on: true, node: <Ic><path d="M5 2l11 9-6 1-5 6z" /></Ic> },
    { node: <Ic><path d="M5 2l11 9-6 1-5 6z" fill={F} /></Ic> },
    { node: <Ic><path d="M4 2h7l4 4v6M4 2v15h6M11 2v4h4" /><path d="M12 11l6 4-6 4z" fill={F} stroke="none" /></Ic> },
    { node: <Ic><path d="M2 3v14M18 3v14M5 10h10M7 8l-2 2 2 2M13 8l2 2-2 2" strokeWidth="1.3" /></Ic> },
    { corner: true, node: <Ic><path d="M3 8v9h14V8h-4M3 8h4M10 2v8M7 7l3 3 3-3" strokeWidth="1.4" /><path d="M6 12h2v2H6zM9 12h2v2H9zM12 12h2v2h-2z" fill={F} stroke="none" /></Ic> },
  ],
  [
    { corner: true, node: <Ic><text x="10" y="17" textAnchor="middle" fontFamily="Liberation Sans, sans-serif" fontWeight="700" fontSize="19" fill={F} stroke="none">T</text></Ic> },
    { node: <Ic><path d="M3 17L17 3" strokeWidth="1.2" /></Ic> },
    { corner: true, node: <PenTool size={18} fill="#888" stroke={F} /> },
    { corner: true, node: <Pencil size={18} fill={F} stroke={F} /> },
    { corner: true, node: <Ic><rect x="2.5" y="3.5" width="15" height="13" strokeWidth="1.2" /><path d="M3 4l14 12M17 4L3 16" /></Ic> },
    { corner: true, node: <Ic><ellipse cx="10" cy="10" rx="8.5" ry="6.5" fill="#666" /></Ic> },
  ],
  [
    { node: <Scissors size={18} stroke={F} /> },
    { corner: true, node: <Ic><path d="M3 7h7v2h7l-3 8H3z" fill={F} stroke="none" /><path d="M5 5h7M10 3l2 2-2 2" /></Ic> },
    { node: <Swatch width="16" height="14" viewBox="0 0 16 14"><defs><linearGradient id="tg"><stop offset="0" stopColor="#222" /><stop offset="1" stopColor="#ccc" /></linearGradient></defs><rect x=".5" y=".5" width="15" height="13" fill="url(#tg)" stroke="#aaa" /></Swatch> },
    { node: <Ic><rect x="3" y="4" width="14" height="12" /><path d="M3 4h3v3H3zM9 4h3v3H9zM6 7h3v3H6zM12 7h3v3h-3zM3 10h3v3H3zM9 10h3v3H9zM6 13h3v3H6zM12 13h3v3h-3z" fill="#999" stroke="none" /></Ic> },
  ],
  [
    { node: <Ic><path d="M3 3h14v10l-4 4H3z" fill={F} stroke="none" /><path d="M6 7h8M6 10h8M6 13h4" stroke="#333" /></Ic> },
    { corner: true, node: <Pipette size={18} stroke={F} /> },
    { node: <Hand size={19} fill={F} stroke="#555" /> },
    { node: <Search size={18} stroke={F} /> },
  ],
];

const Tools = () => (
  <ToolBar>
    <ToolHead>
      ››
      <ToolGrip />
    </ToolHead>
    {ToolIcons.map((group, g) => (
      <ToolGroup key={g}>
        {group.map((t, i) => (
          <Tool key={i} $on={t.on}>
            {t.node}
            {t.corner && <ToolCorner />}
          </Tool>
        ))}
      </ToolGroup>
    ))}
    <ColorBlock>
      <svg width="32" height="50" viewBox="0 0 32 50">
        <rect x="1" y="4" width="8" height="7" fill="none" stroke="#999" />
        <path d="M22 4h6v6M24 2l-3 2 3 2M26 12l2-2 2 2" fill="none" stroke="#999" />
        <rect x="11" y="29" width="19" height="19" fill="#fff" />
        <rect x="16" y="34" width="9" height="9" fill="#333" />
        <line x1="11" y1="48" x2="30" y2="29" stroke="#d01c24" strokeWidth="2" />
        <rect x="2" y="20" width="19" height="19" fill="#fff" stroke="#333" />
        <line x1="2" y1="39" x2="21" y2="20" stroke="#d01c24" strokeWidth="2" />
      </svg>
    </ColorBlock>
    <FormatRow>
      <FormatBox>
        <svg width="9" height="9" viewBox="0 0 9 9">
          <rect x="1" y="1" width="7" height="7" fill="none" stroke="#aaa" strokeWidth="1.4" />
        </svg>
      </FormatBox>
      <FormatT>T</FormatT>
    </FormatRow>
    <ToolSpaced $on>
      <NoneSwatch />
      <ToolCorner />
    </ToolSpaced>
    <ToolLine />
    <ToolSpaced>
      <svg width="20" height="14" viewBox="0 0 20 14">
        <rect x="6" y="4" width="12" height="8" fill="#999" />
        <path d="M1 6h3v2H1zM1 10h3v2H1zM7 1v2M10 1v2M13 1v2M16 1v2" stroke="#888" fill="none" />
      </svg>
    </ToolSpaced>
    <ToolLine />
    <ToolSpaced $on>
      <svg width="14" height="14" viewBox="0 0 14 14">
        <rect width="14" height="14" fill="#888" />
        <rect x="2" y="3" width="10" height="8" fill="none" stroke="#444" />
        <path d="M7 3v8" stroke="#444" />
      </svg>
      <ToolCorner />
    </ToolSpaced>
  </ToolBar>
);

/* document text: * bold italic, / italic, ~ not justified, >n inset from the cut page edge */
const columnA = [
  "~>2n.", "", "ch die Hoffnung auf", ">6Ernsthaftes fast aufge-", ">9hatte, wagte ich mal,", "ne kostenlose Plattform",
  "steigen. Hier durften", "chreiben. Ich fand sie", "~nteressant.", "n den üblichen per-", "hen Angaben wurden",
  "ende Fragen gestellt, die", "freiwillig beantworten", ". Als ich die gesichtet", ">7war ich animiert. Die",
  "n waren zum Teil so ku-", "~lass ich lachen musste.", "erschock! Eine Steil-", "~e für mich!", "",
  "achte mich an die „Ar-", "", ">6Die brachte richtig", ">12Meine Begeisterung", "~s.", "mmer geschehen wür-",
  "er immer sich melde-", "", ">12die Fragen waren es",
];
const columnB = [
  "wert, diese Plattform auszu-", "~probieren.", "", "Ich nannte mich auch hier", "~wieder „Seerose“.", "Es klappte auf Anhieb. Auch",
  "mein Eingangstext wurde an-", "standslos akzeptiert. Ich hat-", "te einen neuen formuliert.", "Schwierigkeiten gab es beim",
  "Foto. Zwei Konterfeis wur-", "den abgelehnt – technisch", "nicht geeignet. So ein Blöd-", "sinn! Es waren einwandfreie",
  "JPG-Fotos! Beim dritten Ver-", "~such klappte es schließlich.", "", "~Ich war wieder on!", "", "Die Flut legte los. Einzel-",
  "heiten darüber später! Zuerst", "möchte ich auf die Fragen", "eingehen – und natürlich auf", "meine Antworten. Ich finde,",
  "viele sind es wert, hier aufge-", "~listet zu werden.", "Es gab verschiedene Kate-", "gorien. Die amüsantesten", "Fragen bringe ich hier – und",
];
const columnC = [
  "natürlich meine kongenialen", "~Antworten!", "Wie gesagt, die Fragen sind", "einer Flirtplattform entnom-", "men, deren Namen ich aber",
  "nicht nennen möchte – we-", "gen Schleichwerbung! Da es", "sich bei meinem Geschreibsel", "hier um keine Dissertation",
  "oder ähnliches handelt, dürf-", "te das wohl unbeanstandet", "durchgehen. Die Antworten", "aber sind alle von mir – ori-",
  "ginal und hoffentlich auch", "~originell.", "", "~Los geht ’s!", "", "*Wie sieht für Sie ein ausge-", "*~fülltes Liebesleben aus?",
  "/Die Antwort ist schon in der", "/~Frage enthalten.", "", "*Was ist das gewisse Etwas,", "*~das er/sie haben muss?",
  "/Etwas Gewisses – und ganz ge-", "/~wiss viel Ungewisses.", "", "*Was lässt Sie heute noch er-",
];
const columnD = [
  "*~röten?", "/Heute nichts mehr; es ist schon", "/~23.58 Uhr.", "", "*Würden Sie Ihrem Partner", "*~aus einem Buch vorlesen?",
  "/Na klar! Ich kann ihm auch", "/~gern etwas vorschreiben!", "", "*~Was halten Sie von Treue?", "/~Ich bin nicht haltlos.", "",
  "*Was ist für Sie ein Tren-", "*nungsgrund ohne Diskus-", "*~sion?", "/Wenn wir nicht mal mehr dis-", "/~kutieren!", "",
  "*Glauben Sie an Liebe auf", "*~den ersten Blick?", "/Hmm… wohl eher an… ge-", "/~wisse Wünsche!", "", "*Glauben Sie an Liebe auf",
  "*~den zweiten Blick?", "/Ja; es darf auch der dritte,", "/~vierte… Blick sein!", "", "*Hatten Sie bereits richtig",
];
const cleanWords = new Set(["Wie", "die", "sind", "Dissertation", "–", "Da", "es", "Die", "ich", "Ich", "Los", "so", "."]);

const StoryColumn = ({ x, y, w = 208, rows }: { x: number; y: number; w?: number; rows: string[] }) => (
  <TextColumn $x={x} $y={y} $w={w}>
    {rows.map((row, i) => {
      const m = row.match(/^([*/]?)(~?)(?:>(\d+))?(.*)$/)!;
      return (
        <TextLine key={i} $kind={m[1]} $just={!m[2]} $inset={Number(m[3] || 0)}>
          {m[4] && m[4].split(" ").map((w, k) => (
            <Word key={k} $plain={cleanWords.has(w)}>
              {w}
            </Word>
          ))}
        </TextLine>
      );
    })}
  </TextColumn>
);

const Document = () => (
  <PageSheet>
    <Spine />
    <Rect $x={-10} $y={92} $w={176} $h={717} $c="#c45ad8" />
    <Rect $x={185} $y={92} $w={207} $h={717} $c="#c45ad8" />
    <Rect $x={776} $y={92} $w={20} $h={717} $c="#8a4fd0" />
    <StoryColumn x={0} y={88} w={166} rows={columnA} />
    <StoryColumn x={185} y={88} rows={columnB} />
    <StoryColumn x={490} y={34} rows={columnC} />
    <StoryColumn x={839} y={62.5} rows={columnD} />
    <Rect $x={570} $y={92} $w={433} $h={717} $c="#629ce0" />
    <Rect $x={490} $y={39} $w={208} $h={718} $c="#629ce0" />
    <Rect $x={838} $y={67} $w={208} $h={716} $c="#629ce0" />
    {[
      [547, 189], [651, 189], [755, 189], [547, 548], [755, 548], [547, 908], [651, 908], [755, 908],
    ].map(([x, y]) => (
      <Handle key={`${x}-${y}`} $x={x} $y={y} />
    ))}
    <Handle $x={755} $y={214} $kind="y" />
    {[
      [224, 935], [242, 267], [449, 935], [548, 214], [755, 883], [896, 240], [1103, 911],
    ].map(([x, y]) => (
      <Port key={`${x}-${y}`} $x={x} $y={y} />
    ))}
  </PageSheet>
);

const rulerMarks = Array.from({ length: 29 }, (_, i) => 30 + i * 10);
const sideMarks = Array.from({ length: 21 }, (_, i) => String(i * 10));

const Spread = ({ left, right, on }: { left?: number; right?: number; on?: boolean }) => {
  const bars = (ox: number, seed: number, color: string, soft: string) => {
    const out: React.ReactNode[] = [];
    let r = seed * 137;
    const next = () => {
      r = (r * 9301 + 49297) % 233280;
      return r / 233280;
    };
    for (const cx of [ox + 4, ox + 19]) {
      for (let y = 7; y < 50; y += 2.6) {
        const v = next();
        if (v < 0.08) continue;
        out.push(<rect key={`${cx}-${y}`} x={cx} y={y} width={14 - next() * (v < 0.25 ? 8 : 1)} height={2.2} fill={v < 0.7 ? color : soft} />);
      }
    }
    return out;
  };
  return (
    <Swatch width="74" height="54" viewBox="0 0 74 54">
      {left !== undefined && (
        <>
          <rect x="0.5" y="0.5" width="36" height="53" fill="#fff" stroke="#8a8a8a" />
          {bars(0, left, "#111", "#888")}
          <text x="2" y="8" fontSize="8" fontFamily="Liberation Sans, sans-serif" fill="#222">A</text>
        </>
      )}
      {right !== undefined && (
        <>
          <rect x="36.5" y="0.5" width="37" height="53" fill={on ? "#8dbbf0" : "#fff"} stroke="#8a8a8a" />
          {on && <rect x="37" y="1" width="36" height="10" fill="#fff" />}
          {bars(37, right, on ? "#2f6fb8" : "#111", on ? "#5b93d2" : "#888")}
          {right % 2 === 1 && left !== undefined && <rect x="40" y="5" width="31" height="46" fill="none" stroke="#3f7ec4" />}
          <text x="65" y="8" fontSize="8" fontFamily="Liberation Sans, sans-serif" fontWeight={on ? 700 : 400} fill="#222">A</text>
        </>
      )}
    </Swatch>
  );
};

const MasterThumb = ({ spread }: { spread?: boolean }) => (
  <svg width="73" height="54" viewBox="0 0 73 54">
    {spread && (
      <>
        <rect x=".5" y=".5" width="36" height="53" fill="#fff" stroke="#888" />
        <rect x="4.5" y="4" width="28" height="45" fill="none" stroke="#5e8fb0" strokeDasharray="1 3" />
      </>
    )}
    <rect x="36.5" y=".5" width="36" height="53" fill="#fff" stroke="#888" />
    {spread && <rect x="40.5" y="4" width="28" height="45" fill="none" stroke="#5e8fb0" strokeDasharray="1 3" />}
  </svg>
);

const dockGroups: { label: string; icon: React.ReactNode; on?: boolean }[][] = [
  [
    { label: "Ebenen", on: true, icon: <Layers size={20} fill={F} stroke="#222" /> },
    { label: "Farbe", icon: <Palette size={20} fill={F} stroke="#333" /> },
    { label: "Farbfelder", icon: <Ic><path d="M2 4h16v12H2z" /><path d="M3 5h4v4H3zM8 5h4v4H8zM13 5h4v4h-4zM3 10h4v5H3zM8 10h4v5H8zM13 10h4v5h-4z" fill="#8a8a8a" stroke="none" /></Ic> },
    { label: "Preflight", icon: <Ic><path d="M3 2h9l3 3v6l-5 7H3z" fill="#8a8a8a" stroke="none" /><path d="M5 6l1 1 2-2M5 10l1 1 2-2" stroke="#333" /><path d="M10 17l7-8 2 2-7 8z" fill={F} stroke="none" /></Ic> },
  ],
  [{ label: "Verlauf", icon: <Swatch width="18" height="13" viewBox="0 0 18 13"><defs><linearGradient id="dg"><stop offset="0" stopColor="#222" /><stop offset="1" stopColor="#ddd" /></linearGradient></defs><rect x=".5" y=".5" width="17" height="12" fill="url(#dg)" stroke="#bbb" /></Swatch> }],
  [
    { label: "Zeichenformate", icon: <Ic><path d="M2 11h6v6H2zM5 14h6v5H5z" /><text x="9" y="11" fontSize="13" fontFamily="Liberation Sans, sans-serif" fill={F} stroke="none">A</text></Ic> },
    { label: "Absatzformate", icon: <Ic><path d="M2 11h6v6H2zM5 14h6v5H5z" /><path d="M14 2h5v13M17 2v13" /><path d="M14 2a3 3 0 0 0 0 6h2V2z" fill={F} stroke="none" /></Ic> },
    { label: "Absatz", icon: <Ic><path d="M9 2h7M12 2v16M15 2v16" /><path d="M9 2a3.5 3.5 0 0 0 0 8h3V2z" fill={F} stroke="none" /></Ic> },
    { label: "Objektformate", icon: <Ic><path d="M6 3h4a2 2 0 0 0 4 0h4v10h-8v-2H6z" /><path d="M2 11h6v6H2zM5 14h6v5H5z" /></Ic> },
    { label: "Glyphen", icon: <Ic><text x="10" y="17" textAnchor="middle" fontSize="19" fontStyle="italic" fontFamily="Liberation Serif, serif" fill="#8a8a8a" stroke="none">A</text></Ic> },
    { label: "Verknüpfungen", icon: <Ic><rect x="1" y="6" width="11" height="8" rx="4" strokeWidth="1.5" /><rect x="8" y="6" width="11" height="8" rx="4" strokeWidth="1.5" /></Ic> },
  ],
  [
    { label: "Kontur", icon: <Ic><path d="M2 4h16M2 10h16" strokeWidth="2" /><path d="M2 16h16" strokeWidth="3" /></Ic> },
    { label: "CC Libraries", icon: <Ic><path d="M2 3h13v2M2 3v13h2" /><rect x="4.5" y="5" width="13" height="13" /><path d="M11 5h4v6l-2-1.5-2 1.5z" fill={F} stroke="none" /></Ic> },
  ],
  [{ label: "Textumfluss", icon: <Ic><path d="M2 4h16M2 16h16M2 8h3M15 8h3M2 12h3M15 12h3M2 10h3M15 10h3" /><circle cx="10" cy="10" r="4" fill="#ccc" stroke="none" /></Ic> }],
  [{ label: "Tabelle", icon: <Ic><rect x="3" y="3.5" width="14" height="13" /><path d="M3 7h14M3 10h14M3 13h14M7 7v10" /></Ic> }],
];

const App = () => (
  <Shell>
    <Global />
    <MenuBar>
      <Logo>Id</Logo>
      <HomeBtn>
        <svg width="19" height="17" viewBox="0 0 19 17" fill="#b8b8b8">
          <path d="M9.5 0L0 8.5h3V17h4.5v-5h4v5H16V8.5h3z" />
        </svg>
      </HomeBtn>
      <MenuList>
        {["Datei", "Bearbeiten", "Layout", "Schrift", "Objekt", "Tabelle", "Ansicht", "Fenster", "Hilfe"].map((m) => (
          <span key={m}>{m}</span>
        ))}
      </MenuList>
      <MenuRight>
        <Share>Freigeben</Share>
        <MenuSep />
        <BookLabel>Buch</BookLabel>
        <Chev s={10} />
        <MenuSep />
        <StockSearch>
          <svg width="16" height="14" viewBox="0 0 16 14" fill="none" stroke="#3f86e0" strokeWidth="1.3">
            <circle cx="7" cy="5" r="3.5" />
            <path d="M4.5 8L1 12" />
            <path d="M11 9h4l-2 2z" fill="#3f86e0" stroke="none" />
          </svg>
          Adobe Stock
        </StockSearch>
        <WinControls>
          <svg width="11" height="11" viewBox="0 0 11 11" fill="#8c8c8c">
            <rect x="1" y="7" width="9" height="2" />
          </svg>
          <svg width="12" height="11" viewBox="0 0 12 11" fill="none" stroke="#8c8c8c" strokeWidth="1.3">
            <rect x="1" y="3" width="7" height="7" />
            <path d="M4 3V1h7v6H8" />
          </svg>
          <svg width="11" height="11" viewBox="0 0 11 11" stroke="#9a9a9a" strokeWidth="1.8">
            <path d="M1 1l9 9M10 1l-9 9" />
          </svg>
        </WinControls>
      </MenuRight>
    </MenuBar>

    <ControlStrip />

    <Workspace>
      <Tools />
      <DocArea>
        <TabRow>
          <DocTab $on>
            *Unbenannt-1 @ 117 %<TabClose>×</TabClose>
          </DocTab>
          <DocTab>
            Testdatei.indd @ 117 %<TabClose>×</TabClose>
          </DocTab>
        </TabRow>
        <TopRuler>
          <RulerOrigin />
          {rulerMarks.map((m) => (
            <RulerCell key={m}>{m}</RulerCell>
          ))}
        </TopRuler>
        <CanvasRow>
          <SideRuler>
            {sideMarks.map((m) => (
              <SideCell key={m}>
                {m.split("").map((d, i) => (
                  <span key={i}>{d}</span>
                ))}
              </SideCell>
            ))}
          </SideRuler>
          <Canvas>
            <Document />
          </Canvas>
          <VScroll>
            <Chev s={12} />
          </VScroll>
        </CanvasRow>
        <StatusBar>
          <StatusItem $ml={14}>117 %</StatusItem>
          <StatusItem $ml={15}><Chev s={10} /></StatusItem>
          <StatusItem $ml={9}>
            <svg width="10" height="10" viewBox="0 0 10 10" fill="#a8a8a8"><rect x="1" y="1" width="1.5" height="8" /><path d="M9 1v8L3 5z" /></svg>
          </StatusItem>
          <StatusItem $ml={11}>
            <svg width="8" height="10" viewBox="0 0 8 10" fill="#a8a8a8"><path d="M7 1v8L1 5z" /></svg>
          </StatusItem>
          <PageField>
            7
            <FieldDrop><Chev /></FieldDrop>
          </PageField>
          <StatusItem $ml={12}>
            <svg width="8" height="10" viewBox="0 0 8 10" fill="#a8a8a8"><path d="M1 1v8l6-4z" /></svg>
          </StatusItem>
          <StatusItem $ml={11}>
            <svg width="10" height="10" viewBox="0 0 10 10" fill="#a8a8a8"><rect x="7.5" y="1" width="1.5" height="8" /><path d="M1 1v8l6-4z" /></svg>
          </StatusItem>
          <StatusItem $ml={16}>
            <svg width="14" height="13" viewBox="0 0 14 13" fill="none" stroke="#a8a8a8" strokeWidth="1.6"><path d="M1 12V6a5 5 0 0 1 10 0v6M6 3v4" /></svg>
          </StatusItem>
          <StatusItem $ml={17}>[Grundprofil] (Arb...</StatusItem>
          <StatusItem $ml={8}><Chev s={10} /></StatusItem>
          <StatusItem $ml={15}>
            <GreenDot />
            Ohne Fehler
          </StatusItem>
          <StatusItem $ml={14}><Chev s={10} /></StatusItem>
          <StatusItem $ml={8}><Chev d="left" s={10} /></StatusItem>
          <ScrollTrack>
            <ScrollThumb />
          </ScrollTrack>
          <StatusEnd>
            <Chev d="right" s={10} />
            <svg width="16" height="11" viewBox="0 0 16 11" fill="none" stroke="#ccc" strokeWidth="1.4"><rect x="1" y="1" width="14" height="9" /><path d="M8 1v9" /></svg>
          </StatusEnd>
        </StatusBar>
      </DocArea>
      <RightStrip />
      <Dock>
        <DockHead>‹‹</DockHead>
        {dockGroups.map((group, g) => (
          <DockGroup key={g}>
            <DockGrip />
            {group.map((d) => (
              <DockItem key={d.label} $on={d.on}>
                <DockIcon>{d.icon}</DockIcon>
                {d.label}
              </DockItem>
            ))}
          </DockGroup>
        ))}
      </Dock>
    </Workspace>

    <LayersPanel>
      <PanelTabs>
        <PanelTab $on $w={70}>
          <StepIconSmall />
          Ebenen
        </PanelTab>
        <PanelTab $w={47}>Farbe</PanelTab>
        <PanelTab $w={70}>Farbfelder</PanelTab>
        <PanelTab $w={70}>Preflight</PanelTab>
        <PanelMenu>
          ››
          <Ctl name="menu" s={16} />
        </PanelMenu>
      </PanelTabs>
      <LayerRow>
        <EyeCell>
          <svg width="14" height="10" viewBox="0 0 14 10" fill="#b0b0b0"><path d="M7 0C3 0 1 3 0 5c1 2 3 5 7 5s6-3 7-5c-1-2-3-5-7-5z" /><circle cx="7" cy="5" r="2.5" fill="#333" /></svg>
        </EyeCell>
        <LayerColor />
        <StatusItem $ml={10}><Chev d="right" s={10} /></StatusItem>
        <LayerName>Ebene 1</LayerName>
        <Pencil size={13} fill="#a0a0a0" stroke="#a0a0a0" />
        <LayerMark />
      </LayerRow>
      <PanelFill />
      <PanelFoot $h={24}>
        <svg width="12" height="12" viewBox="0 0 12 12" fill="none" stroke="#999"><rect x=".5" y=".5" width="11" height="11" /><path d="M3 6h6M6 3v6" /></svg>
        <svg width="12" height="13" viewBox="0 0 12 13" fill="none" stroke="#777"><path d="M1 3h10M2 3v9h8V3M4 1h4M4 5v5M6 5v5M8 5v5" /></svg>
      </PanelFoot>
    </LayersPanel>

    <PagesPanel>
      <PanelTitle>‹‹&nbsp;&nbsp;&nbsp;✕</PanelTitle>
      <PagesTabs>
        <PanelTab $on $w={63}>
          <StepIconSmall />
          Seiten
        </PanelTab>
        <PanelMenu>
          <Ctl name="menu" s={16} />
        </PanelMenu>
      </PagesTabs>
      <Masters>
        <MasterRow>
          <MasterName>[Ohne]</MasterName>
          <MasterThumb />
        </MasterRow>
        <MasterRow>
          <MasterName>A-Musterseite</MasterName>
          <MasterThumb spread />
        </MasterRow>
      </Masters>
      <PagesBody>
        <SpreadList>
          <TopMarker />
          <SpreadRow>
            <Spread right={5} />
            <SpreadLabel $right><LabelChip>5</LabelChip></SpreadLabel>
          </SpreadRow>
          <SpreadRow>
            <Spread left={6} right={7} on />
            <SpreadLabel><LabelChip $on>6-7</LabelChip></SpreadLabel>
          </SpreadRow>
          <SpreadRow>
            <Spread left={8} right={9} />
            <SpreadLabel><LabelChip>8-9</LabelChip></SpreadLabel>
          </SpreadRow>
          <SpreadRow>
            <Spread left={10} right={11} />
            <SpreadLabel><LabelChip>10-11</LabelChip></SpreadLabel>
          </SpreadRow>
          <SpreadRow>
            <Spread left={12} right={13} />
          </SpreadRow>
        </SpreadList>
        <PagesScroll>
          <Chev d="up" />
          <PagesThumb />
          <ScrollEnd>
            <Chev />
          </ScrollEnd>
        </PagesScroll>
      </PagesBody>
      <PanelFoot $h={24}>
        <FootText>15 Seiten auf 8 Druckbögen</FootText>
        <svg width="16" height="13" viewBox="0 0 16 13" fill="none" stroke="#a8a8a8"><path d="M1 5h7v7H1zM5 5V2h6l3 3v6H8" /></svg>
        <svg width="12" height="12" viewBox="0 0 12 12" fill="none" stroke="#a8a8a8"><rect x=".5" y=".5" width="11" height="11" /><path d="M3 6h6M6 3v6" /></svg>
        <svg width="12" height="13" viewBox="0 0 12 13" fill="none" stroke="#a8a8a8"><path d="M1 3h10M2 3v9h8V3M4 1h4M4 5v5M6 5v5M8 5v5" /></svg>
      </PanelFoot>
      <PanelResize />
    </PagesPanel>

    <Overlay width="1859" height="1080" viewBox="0 0 1859 1080">
      <g stroke="#b3cdf6" strokeWidth="3.5" fill="none">
        <path d="M58 243L270 142" />
        <path d="M224 932L242 270" />
        <path d="M449 932L546 218" />
        <path d="M755 880L895 244" />
        <path d="M1100 911L797 1062" />
      </g>
      <g stroke="#c6222e" strokeWidth="3.5" fill="none">
        <ellipse cx="1235" cy="63" rx="74" ry="56" />
        <ellipse cx="583" cy="230" rx="83" ry="54" />
        <ellipse cx="960" cy="247" rx="106" ry="57" />
        <ellipse cx="1390" cy="650" rx="94" ry="57" />
      </g>
    </Overlay>
  </Shell>
);

export default App;
